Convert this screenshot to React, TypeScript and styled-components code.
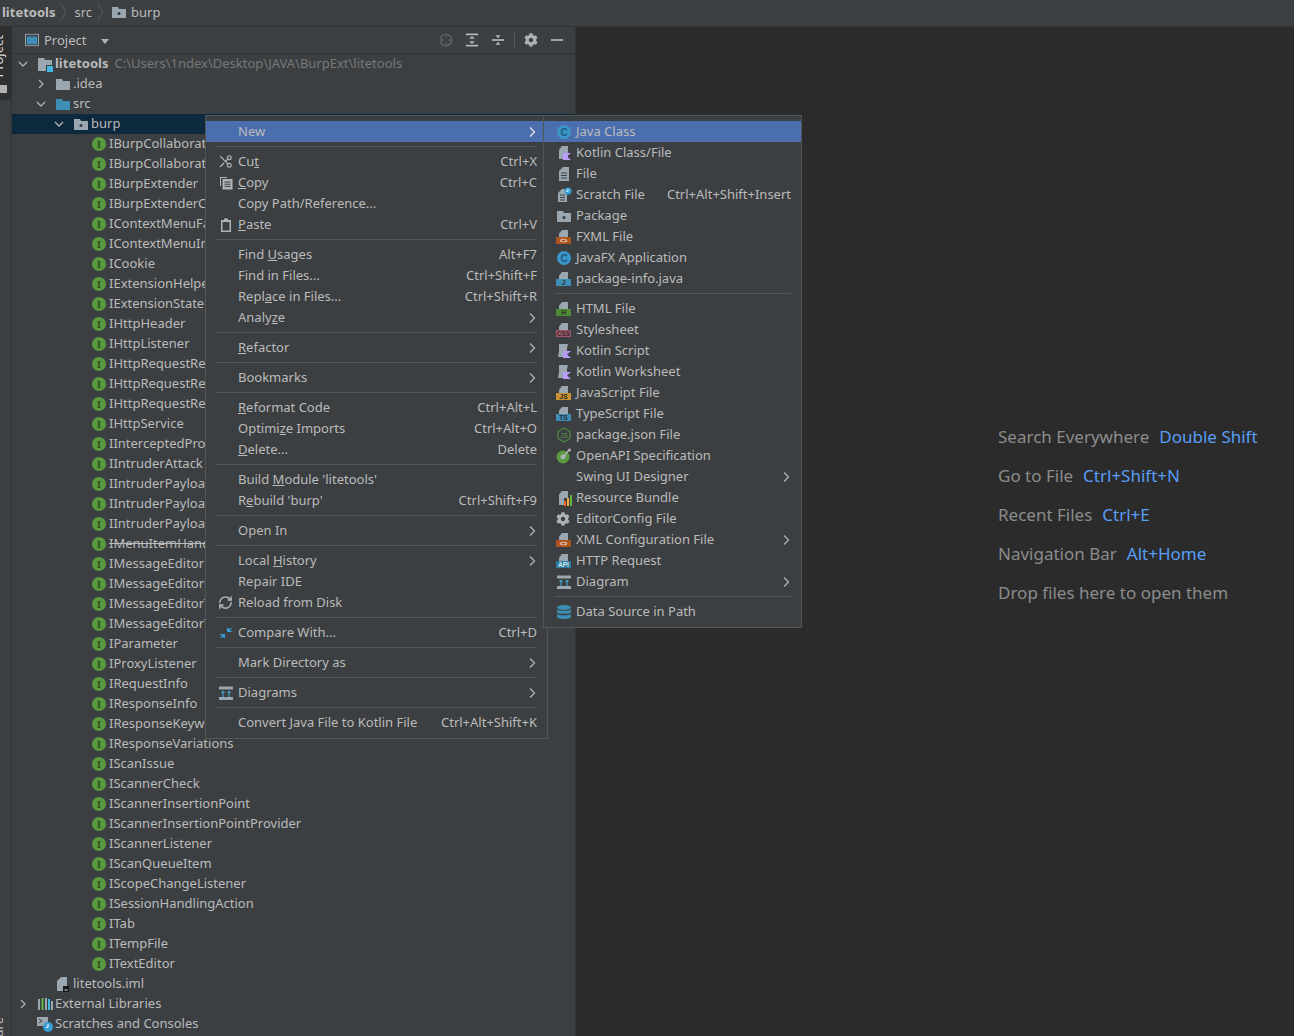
import React from 'react';
import styled, { createGlobalStyle } from 'styled-components';
import { FaCog } from 'react-icons/fa';
import { Scissors, RefreshCw } from 'lucide-react';

const UI_FONT = '"Noto Sans", "Open Sans", sans-serif';
const TEXT = '#bbbbbb';
const GREY = '#9aa7b0';
const ICON = '#afb1b3';
const BLUE = '#3592c4';

const GlobalStyle = createGlobalStyle`
  html, body {
    margin: 0;
    padding: 0;
    background: #3c3f41;
  }
  * {
    box-sizing: border-box;
  }
`;

const Page = styled.div`
  position: relative;
  width: 1294px;
  height: 1036px;
  overflow: hidden;
  display: flex;
  flex-direction: column;
  background: #3c3f41;
  color: ${TEXT};
  font-family: ${UI_FONT};
  font-size: 13px;
`;

const NavBar = styled.div`
  display: flex;
  align-items: center;
  flex: 0 0 27px;
  padding: 0 0 3px 2px;
  border-bottom: 1px solid #323232;
`;

const Crumb = styled.span<{ $bold?: boolean }>`
  font-weight: ${(p) => (p.$bold ? 700 : 400)};
`;

const CrumbSlash = styled.svg`
  width: 7px;
  height: 18px;
  margin: 0 7px 0 3px;
`;

const CrumbFolder = styled.span`
  display: flex;
  margin-right: 4px;
`;

const Body = styled.div`
  flex: 1;
  display: flex;
  min-height: 0;
`;

const Stripe = styled.div`
  flex: 0 0 12px;
  display: flex;
  flex-direction: column;
  justify-content: space-between;
  overflow: hidden;
  border-right: 1px solid #323232;
`;

const StripeTab = styled.div`
  display: flex;
  flex-direction: column;
  align-items: flex-start;
  height: 73px;
  padding-top: 8px;
  background: #2d2f30;
`;

const StripeLabel = styled.span<{ $selected?: boolean }>`
  writing-mode: vertical-rl;
  transform: rotate(180deg);
  margin-left: -10px;
  line-height: 17px;
  color: ${(p) => (p.$selected ? '#d8d8d8' : TEXT)};
`;

const StripeFolder = styled.span`
  width: 7px;
  height: 8px;
  margin-top: 8px;
  background: ${ICON};
`;

const StructureLabel = styled(StripeLabel)`
  margin-bottom: -38px;
`;

const ProjectPanel = styled.div`
  flex: 0 0 564px;
  display: flex;
  flex-direction: column;
  min-height: 0;
  border-right: 1px solid #323232;
`;

const PanelHeader = styled.div`
  flex: 0 0 27px;
  display: flex;
  align-items: center;
  padding: 0 5px 0 13px;
  border-bottom: 1px solid #323232;
`;

const PanelTitle = styled.span`
  margin-left: 5px;
`;

const Caret = styled.span`
  width: 0;
  height: 0;
  margin: 2px auto 0 15px;
  border-left: 4.5px solid transparent;
  border-right: 4.5px solid transparent;
  border-top: 5px solid ${ICON};
`;

const ToolButton = styled.span`
  display: flex;
  justify-content: center;
  width: 26px;
`;

const ToolDivider = styled.span`
  width: 1px;
  height: 16px;
  margin: 0 3px 0 3px;
  background: #515658;
`;

const Tree = styled.div`
  flex: 1;
  overflow: hidden;
`;

const TreeRow = styled.div<{ $level: number; $selected?: boolean }>`
  display: flex;
  align-items: center;
  height: 20px;
  padding-left: ${(p) => 3 + p.$level * 18}px;
  background: ${(p) => (p.$selected ? '#0d293e' : 'transparent')};
  white-space: nowrap;
`;

const Twist = styled.span`
  flex: 0 0 16px;
  display: flex;
  justify-content: center;
  margin-right: 6px;
`;

const NodeIcon = styled.span`
  flex: 0 0 16px;
  display: flex;
  margin-right: 2px;
`;

const NodeName = styled.span<{ $bold?: boolean; $struck?: boolean }>`
  position: relative;
  top: -1px;
  font-weight: ${(p) => (p.$bold ? 700 : 400)};
  text-decoration: ${(p) => (p.$struck ? 'line-through' : 'none')};
`;

const NodePath = styled.span`
  position: relative;
  top: -1px;
  margin-left: 6px;
  color: #787878;
`;

const Editor = styled.div`
  flex: 1;
  display: flex;
  flex-direction: column;
  gap: 15px;
  padding: 398px 0 0 422px;
  background: #2b2b2b;
  font-size: 17px;
  color: #8c8c8c;
`;

const Hint = styled.div`
  display: flex;
  gap: 10px;
  height: 24px;
  line-height: 24px;
  white-space: nowrap;
`;

const HintKey = styled.span`
  color: #589df6;
`;

const Menu = styled.div<{ $left: number; $top: number; $width: number }>`
  position: absolute;
  left: ${(p) => p.$left}px;
  top: ${(p) => p.$top}px;
  width: ${(p) => p.$width}px;
  padding: 5px 0;
  background: #3c3f41;
  border: 1px solid #515658;
  white-space: nowrap;
`;

const MenuRow = styled.div<{ $active?: boolean }>`
  display: flex;
  align-items: center;
  height: 21px;
  padding: 0 10px 0 12px;
  background: ${(p) => (p.$active ? '#4b6eaf' : 'transparent')};
`;

const MenuIcon = styled.span`
  flex: 0 0 16px;
  display: flex;
  align-items: center;
  margin-right: 4px;
`;

const MenuLabel = styled.span`
  flex: 1;
  position: relative;
  top: -1px;
`;

const Shortcut = styled.span`
  position: relative;
  top: -1px;
`;

const Arrow = styled.svg`
  margin-right: 1px;
`;

const MenuSeparator = styled.div`
  height: 1px;
  margin: 4px 10px;
  background: #515658;
`;

type Entry = {
  label?: string;
  keys?: string;
  icon?: React.ReactNode;
  more?: boolean;
  active?: boolean;
};

const FilePart = () => <path d="M6 1h6v7H3V4.5z" fill={GREY} />;

const Svg = ({ children, size = 16 }: { children: React.ReactNode; size?: number }) => (
  <svg width={size} height={size} viewBox="0 0 16 16">
    {children}
  </svg>
);

const CircleIcon = ({ fill, letter, color, serif }: { fill: string; letter: string; color: string; serif?: boolean }) => (
  <Svg>
    <circle cx="8" cy="8" r="7" fill={fill} />
    <text
      x="8"
      y="11.5"
      textAnchor="middle"
      fontSize="10"
      fontWeight="700"
      fontFamily={serif ? '"Liberation Serif", serif' : '"Liberation Sans", sans-serif'}
      fill={color}
    >
      {letter}
    </text>
  </Svg>
);

const InterfaceIcon = () => <CircleIcon fill="#5a9a3e" letter="I" color="#2b4a1c" serif />;
const ClassIcon = () => <CircleIcon fill="#3a95c8" letter="C" color="#1d5a7d" />;

const Folder = ({ fill = GREY, dot }: { fill?: string; dot?: boolean }) => (
  <Svg>
    <path d="M1 3h6l1 2h7v9H1z" fill={fill} />
    {dot && <circle cx="8" cy="9.5" r="1.5" fill="#2b3a44" />}
  </Svg>
);

const ModuleFolder = () => (
  <Svg>
    <path d="M1 2h6l1 2h7v5H9v6H1z" fill={GREY} />
    <rect x="10" y="10" width="6" height="6" fill="#40b6e0" />
  </Svg>
);

const TaggedFile = ({ tag, fill, color = '#2b2b2b' }: { tag: string; fill: string; color?: string }) => (
  <Svg>
    <FilePart />
    <rect x="0" y="8" width="15" height="7" fill={fill} />
    <text x="7.5" y="14" textAnchor="middle" fontSize="6.5" fontWeight="700" fontFamily='"Liberation Sans", sans-serif' fill={color}>
      {tag}
    </text>
  </Svg>
);

const KotlinFile = () => (
  <Svg>
    <path d="M6 1h6v13H3V4.5z" fill={GREY} />
    <path d="M7 8h8l-4 3.5 4 3.5H7z" fill="#b99bf8" />
  </Svg>
);

const KotlinScript = () => (
  <Svg>
    <path d="M3 1h9l-1 4v9H2l1-6z" fill={GREY} />
    <path d="M7 8h8l-4 3.5 4 3.5H7z" fill="#b99bf8" />
  </Svg>
);

const PlainFile = () => (
  <Svg>
    <path d="M7 1h6v14H3V5z" fill={GREY} />
    <path d="M5 7h6M5 9.5h6M5 12h6" stroke="#3c3f41" strokeWidth="1" />
  </Svg>
);

const ScratchFile = () => (
  <Svg>
    <path d="M6 2h5v13H2V6z" fill={GREY} />
    <path d="M4 8h5M4 10.5h5M4 13h5" stroke="#3c3f41" strokeWidth="1" />
    <circle cx="12" cy="4" r="3.6" fill="#389fd6" />
    <path d="M12 2v2.4h-1.6" stroke="#fff" fill="none" strokeWidth="0.9" />
  </Svg>
);

const NodeJsFile = () => (
  <Svg>
    <path d="M8 1l6 3.5v7L8 15l-6-3.5v-7z" fill="none" stroke="#4f8a45" strokeWidth="1.2" />
    <text x="8" y="10.5" textAnchor="middle" fontSize="6.5" fontFamily='"Liberation Sans", sans-serif' fill="#5d9a52">
      JS
    </text>
  </Svg>
);

const OpenApiIcon = () => (
  <Svg>
    <circle cx="7" cy="9" r="6.5" fill="#5b9a3e" />
    <circle cx="7" cy="9" r="2.4" fill={ICON} />
    <path d="M8 8l5-6" stroke={ICON} strokeWidth="1.6" />
    <circle cx="13.5" cy="2" r="1.5" fill={ICON} />
  </Svg>
);

const BundleFile = () => (
  <Svg>
    <path d="M6 1h6v7H8v7H3V4.5z" fill={GREY} />
    <rect x="8" y="11" width="2" height="5" fill="#f26522" />
    <rect x="11" y="8" width="2" height="8" fill="#f4af3d" />
    <rect x="14" y="5" width="2" height="11" fill="#62b543" />
  </Svg>
);

const DiagramIcon = () => (
  <Svg>
    <rect x="1" y="1.5" width="14" height="3" fill={GREY} />
    <rect x="1" y="12" width="14" height="3" fill={GREY} />
    <path d="M5 12V6.5M11 12V6.5M3.5 8L5 6l1.500 2M9.500 8L11 6l1.500 2" stroke="#40b6e0" strokeWidth="1" fill="none" />
  </Svg>
);

const DatabaseIcon = () => (
  <Svg>
    <ellipse cx="8" cy="3.500" rx="7" ry="2.500" fill="#3d8db5" />
    <path d="M1 5.500c1 1.700 13 1.700 14 0v3c-1 1.700-13 1.700-14 0z" fill="#3d8db5" />
    <path d="M1 10c1 1.700 13 1.700 14 0v3c-1 2.700-13 2.700-14 0z" fill="#3d8db5" />
  </Svg>
);

const CopyIcon = () => (
  <Svg>
    <path d="M2 2h7v1H3v8H2z" fill={ICON} />
    <rect x="4.500" y="4" width="10" height="10.500" fill={ICON} />
    <path d="M6.500 7h6M6.500 9.200h6M6.500 11.400h6" stroke="#3c3f41" strokeWidth="1" />
  </Svg>
);

const PasteIcon = () => (
  <Svg>
    <path d="M3 3h3V1.500h4V3h3v12H3zM4.500 5v8.500h7V5z" fill={ICON} fillRule="evenodd" />
  </Svg>
);

const CompareIcon = () => (
  <Svg>
    <path d="M9 7V2.500l2.500 1.500 3-1.500L12 5.500l3 1.500z" fill="#389fd6" />
    <path d="M7 9v4.500L4.500 12l-3 1.500L4 10.500 1 9z" fill="#389fd6" />
  </Svg>
);

const LibrariesIcon = () => (
  <Svg>
    <rect x="1" y="3" width="2" height="11" fill={GREY} />
    <rect x="4.500" y="2" width="2" height="12" fill="#62b543" />
    <rect x="8" y="2" width="2" height="12" fill={GREY} />
    <rect x="11" y="3" width="2" height="11" fill="#40b6e0" />
    <rect x="14" y="5" width="2" height="9" fill={GREY} />
  </Svg>
);

const ScratchesIcon = () => (
  <Svg>
    <rect x="0" y="1" width="11" height="9" fill={GREY} />
    <path d="M2 3l3 2-3 2" stroke="#3c3f41" fill="none" />
    <circle cx="11" cy="11" r="5" fill="#389fd6" />
    <path d="M11 8v3.300H8.800" stroke="#fff" fill="none" />
  </Svg>
);

const ImlFile = () => (
  <Svg>
    <path d="M6 1h6v14H2V5z" fill={GREY} />
    <rect x="8" y="10" width="6" height="6" fill="#1a1a1a" />
    <path d="M9.500 14h3" stroke="#ddd" />
  </Svg>
);

const ProjectWindowIcon = () => (
  <Svg size={14}>
    <rect x="0.500" y="1.500" width="15" height="13" fill="none" stroke={GREY} />
    <rect x="2" y="4" width="12" height="9" fill="#3d8db5" />
  </Svg>
);

const Gear = ({ size = 14 }: { size?: number }) => <FaCog size={size} color={ICON} />;

const LocateIcon = () => (
  <Svg size={14}>
    <circle cx="8" cy="8" r="6.500" fill="none" stroke="#5b5e60" strokeWidth="2" />
    <path d="M8 1v14M1 8h14" stroke="#5b5e60" strokeWidth="1.500" />
    <circle cx="8" cy="8" r="2.500" fill="#3c3f41" />
  </Svg>
);

const ExpandIcon = () => (
  <Svg size={14}>
    <path d="M1 1.500h14M1 14.500h14" stroke={ICON} strokeWidth="2" />
    <path d="M8 3.500l3.500 3h-7zM8 12.500l-3.500-3h7z" fill={ICON} />
  </Svg>
);

const CollapseIcon = () => (
  <Svg size={14}>
    <path d="M1 8h14" stroke={ICON} strokeWidth="2" />
    <path d="M8 6l-3-3.500h6zM8 10l3 3.500H5z" fill={ICON} />
  </Svg>
);

const HideIcon = () => (
  <Svg size={14}>
    <path d="M1 8h14" stroke={ICON} strokeWidth="2" />
  </Svg>
);

const ChevronRight = () => (
  <svg width="8" height="12" viewBox="0 0 8 12">
    <path d="M2 2l4 4-4 4" fill="none" stroke={ICON} strokeWidth="1.300" />
  </svg>
);

const ChevronDown = () => (
  <svg width="12" height="8" viewBox="0 0 12 8">
    <path d="M2 2l4 4 4-4" fill="none" stroke={ICON} strokeWidth="1.300" />
  </svg>
);

// "&" marks the mnemonic letter
const Mnemonic = ({ text }: { text: string }) => {
  const at = text.indexOf('&');
  if (at < 0) return <>{text}</>;
  return (
    <>
      {text.slice(0, at)}
      <u>{text[at + 1]}</u>
      {text.slice(at + 2)}
    </>
  );
};

const mainMenu: Entry[] = [
  { label: 'New', more: true, active: true },
  {},
  { label: 'Cu&t', keys: 'Ctrl+X', icon: <Scissors size={15} color={ICON} strokeWidth={2} style={{ transform: 'scaleX(-1)' }} /> },
  { label: '&Copy', keys: 'Ctrl+C', icon: <CopyIcon /> },
  { label: 'Copy Path/Reference...' },
  { label: '&Paste', keys: 'Ctrl+V', icon: <PasteIcon /> },
  {},
  { label: 'Find &Usages', keys: 'Alt+F7' },
  { label: 'Find in Files...', keys: 'Ctrl+Shift+F' },
  { label: 'Repl&ace in Files...', keys: 'Ctrl+Shift+R' },
  { label: 'Analy&ze', more: true },
  {},
  { label: '&Refactor', more: true },
  {},
  { label: 'Bookmarks', more: true },
  {},
  { label: '&Reformat Code', keys: 'Ctrl+Alt+L' },
  { label: 'Optimi&ze Imports', keys: 'Ctrl+Alt+O' },
  { label: '&Delete...', keys: 'Delete' },
  {},
  { label: "Build &Module 'litetools'" },
  { label: "R&ebuild 'burp'", keys: 'Ctrl+Shift+F9' },
  {},
  { label: 'Open In', more: true },
  {},
  { label: 'Local &History', more: true },
  { label: 'Repair IDE' },
  { label: 'Reload from Disk', icon: <RefreshCw size={15} color={ICON} strokeWidth={2.4} /> },
  {},
  { label: 'Compare With...', keys: 'Ctrl+D', icon: <CompareIcon /> },
  {},
  { label: 'Mark Directory as', more: true },
  {},
  { label: 'Diagrams', more: true, icon: <DiagramIcon /> },
  {},
  { label: 'Convert Java File to Kotlin File', keys: 'Ctrl+Alt+Shift+K' },
];

const newMenu: Entry[] = [
  { label: 'Java Class', active: true, icon: <ClassIcon /> },
  { label: 'Kotlin Class/File', icon: <KotlinFile /> },
  { label: 'File', icon: <PlainFile /> },
  { label: 'Scratch File', keys: 'Ctrl+Alt+Shift+Insert', icon: <ScratchFile /> },
  { label: 'Package', icon: <Folder dot /> },
  { label: 'FXML File', icon: <TaggedFile tag="<>" fill="#b0521f" color="#e8d8c8" /> },
  { label: 'JavaFX Application', icon: <ClassIcon /> },
  { label: 'package-info.java', icon: <TaggedFile tag="J" fill="#3d8db5" /> },
  {},
  { label: 'HTML File', icon: <TaggedFile tag="H" fill="#4d8a33" /> },
  { label: 'Stylesheet', icon: <TaggedFile tag="CSS" fill="#a8566a" /> },
  { label: 'Kotlin Script', icon: <KotlinScript /> },
  { label: 'Kotlin Worksheet', icon: <KotlinScript /> },
  { label: 'JavaScript File', icon: <TaggedFile tag="JS" fill="#c7922f" /> },
  { label: 'TypeScript File', icon: <TaggedFile tag="TS" fill="#3d8db5" /> },
  { label: 'package.json File', icon: <NodeJsFile /> },
  { label: 'OpenAPI Specification', icon: <OpenApiIcon /> },
  { label: 'Swing UI Designer', more: true },
  { label: 'Resource Bundle', icon: <BundleFile /> },
  { label: 'EditorConfig File', icon: <Gear /> },
  { label: 'XML Configuration File', more: true, icon: <TaggedFile tag="<>" fill="#b0521f" color="#e8d8c8" /> },
  { label: 'HTTP Request', icon: <TaggedFile tag="API" fill="#2f7ba3" color="#d8e8f0" /> },
  { label: 'Diagram', more: true, icon: <DiagramIcon /> },
  {},
  { label: 'Data Source in Path', icon: <DatabaseIcon /> },
];

const interfaces = [
  'IBurpCollaboratorClientContext',
  'IBurpCollaboratorInteraction',
  'IBurpExtender',
  'IBurpExtenderCallbacks',
  'IContextMenuFactory',
  'IContextMenuInvocation',
  'ICookie',
  'IExtensionHelpers',
  'IExtensionStateListener',
  'IHttpHeader',
  'IHttpListener',
  'IHttpRequestResponse',
  'IHttpRequestResponsePersisted',
  'IHttpRequestResponseWithMarkers',
  'IHttpService',
  'IInterceptedProxyMessage',
  'IIntruderAttack',
  'IIntruderPayloadGenerator',
  'IIntruderPayloadGeneratorFactory',
  'IIntruderPayloadProcessor',
  'IMenuItemHandler',
  'IMessageEditor',
  'IMessageEditorController',
  'IMessageEditorTab',
  'IMessageEditorTabFactory',
  'IParameter',
  'IProxyListener',
  'IRequestInfo',
  'IResponseInfo',
  'IResponseKeywords',
  'IResponseVariations',
  'IScanIssue',
  'IScannerCheck',
  'IScannerInsertionPoint',
  'IScannerInsertionPointProvider',
  'IScannerListener',
  'IScanQueueItem',
  'IScopeChangeListener',
  'ISessionHandlingAction',
  'ITab',
  'ITempFile',
  'ITextEditor',
];

const hints = [
  { text: 'Search Everywhere', key: 'Double Shift' },
  { text: 'Go to File', key: 'Ctrl+Shift+N' },
  { text: 'Recent Files', key: 'Ctrl+E' },
  { text: 'Navigation Bar', key: 'Alt+Home' },
  { text: 'Drop files here to open them' },
];

const MenuList = ({ items }: { items: Entry[] }) => (
  <>
    {items.map((item, i) =>
      item.label ? (
        <MenuRow key={i} $active={item.active}>
          <MenuIcon>{item.icon}</MenuIcon>
          <MenuLabel>
            <Mnemonic text={item.label} />
          </MenuLabel>
          {item.keys && <Shortcut>{item.keys}</Shortcut>}
          {item.more && (
            <Arrow width="7" height="12" viewBox="0 0 7 12">
              <path d="M1 1.500L5.500 6 1 10.500" fill="none" stroke={item.active ? '#e6e6e6' : ICON} strokeWidth="1.300" />
            </Arrow>
          )}
        </MenuRow>
      ) : (
        <MenuSeparator key={i} />
      ),
    )}
  </>
);

export default function App() {
  return (
    <Page>
      <GlobalStyle />
      <NavBar>
        <Crumb $bold>litetools</Crumb>
        <CrumbSlash viewBox="0 0 7 18" style={{ marginLeft: 5 }}>
          <path d="M1 1l5 8-5 8" fill="none" stroke="#5c6164" />
        </CrumbSlash>
        <Crumb>src</Crumb>
        <CrumbSlash viewBox="0 0 7 18" style={{ marginLeft: 5 }}>
          <path d="M1 1l5 8-5 8" fill="none" stroke="#5c6164" />
        </CrumbSlash>
        <CrumbFolder>
          <Folder dot />
        </CrumbFolder>
        <Crumb>burp</Crumb>
      </NavBar>
      <Body>
        <Stripe>
          <StripeTab>
            <StripeLabel $selected>Project</StripeLabel>
            <StripeFolder />
          </StripeTab>
          <StructureLabel>Structure</StructureLabel>
        </Stripe>
        <ProjectPanel>
          <PanelHeader>
            <ProjectWindowIcon />
            <PanelTitle>Project</PanelTitle>
            <Caret />
            <ToolButton><LocateIcon /></ToolButton>
            <ToolButton><ExpandIcon /></ToolButton>
            <ToolButton><CollapseIcon /></ToolButton>
            <ToolDivider />
            <ToolButton><Gear /></ToolButton>
            <ToolButton><HideIcon /></ToolButton>
          </PanelHeader>
          <Tree>
            <TreeRow $level={0}>
              <Twist><ChevronDown /></Twist>
              <NodeIcon><ModuleFolder /></NodeIcon>
              <NodeName $bold>litetools</NodeName>
              <NodePath>C:\Users\1ndex\Desktop\JAVA\BurpExt\litetools</NodePath>
            </TreeRow>
            <TreeRow $level={1}>
              <Twist><ChevronRight /></Twist>
              <NodeIcon><Folder /></NodeIcon>
              <NodeName>.idea</NodeName>
            </TreeRow>
            <TreeRow $level={1}>
              <Twist><ChevronDown /></Twist>
              <NodeIcon><Folder fill="#3d8db5" /></NodeIcon>
              <NodeName>src</NodeName>
            </TreeRow>
            <TreeRow $level={2} $selected>
              <Twist><ChevronDown /></Twist>
              <NodeIcon><Folder dot /></NodeIcon>
              <NodeName>burp</NodeName>
            </TreeRow>
            {interfaces.map((name) => (
              <TreeRow key={name} $level={3}>
                <Twist />
                <NodeIcon><InterfaceIcon /></NodeIcon>
                <NodeName $struck={name === 'IMenuItemHandler'}>{name}</NodeName>
              </TreeRow>
            ))}
            <TreeRow $level={1}>
              <Twist />
              <NodeIcon><ImlFile /></NodeIcon>
              <NodeName>litetools.iml</NodeName>
            </TreeRow>
            <TreeRow $level={0}>
              <Twist><ChevronRight /></Twist>
              <NodeIcon><LibrariesIcon /></NodeIcon>
              <NodeName>External Libraries</NodeName>
            </TreeRow>
            <TreeRow $level={0}>
              <Twist />
              <NodeIcon><ScratchesIcon /></NodeIcon>
              <NodeName>Scratches and Consoles</NodeName>
            </TreeRow>
          </Tree>
        </ProjectPanel>
        <Editor>
          {hints.map((hint) => (
            <Hint key={hint.text}>
              <span>{hint.text}</span>
              {hint.key && <HintKey>{hint.key}</HintKey>}
            </Hint>
          ))}
        </Editor>
      </Body>
      <Menu $left={205} $top={115} $width={343}>
        <MenuList items={mainMenu} />
      </Menu>
      <Menu $left={543} $top={115} $width={259}>
        <MenuList items={newMenu} />
      </Menu>
    </Page>
  );
}
